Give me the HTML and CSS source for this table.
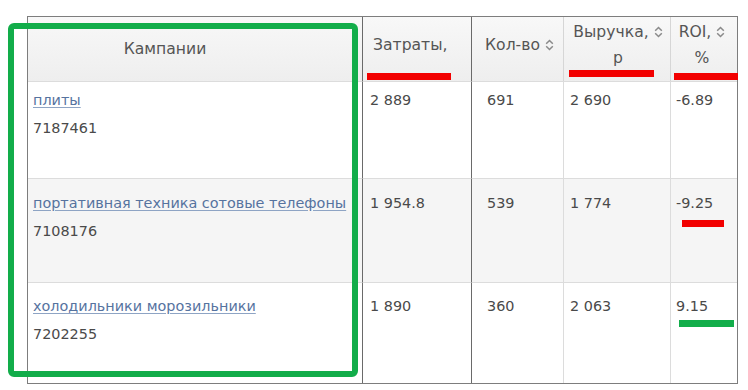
FILE: index.html
```html
<!DOCTYPE html>
<html lang="ru">
<head>
<meta charset="utf-8">
<title>Кампании</title>
<link rel="stylesheet" href="styles.css">
</head>
<body>
<div class="page">
  <div class="report">
    <div class="grid">
      <div class="th th-name">Кампании</div>
      <div class="th th-cost">Затраты,<i class="mark mark-red mark-cost"></i></div>
      <div class="th th-qty"><span class="hl">Кол-во <svg class="sort" viewBox="0 0 9 12"><path d="M1.2 4.8 4.5 1.5 7.8 4.8M1.2 7.2 4.5 10.5 7.8 7.2"/></svg></span></div>
      <div class="th th-rev"><span class="hl">Выручка, <svg class="sort" viewBox="0 0 9 12"><path d="M1.2 4.8 4.5 1.5 7.8 4.8M1.2 7.2 4.5 10.5 7.8 7.2"/></svg></span><span class="hl">р</span><i class="mark mark-red mark-rev"></i></div>
      <div class="th th-roi"><span class="hl">ROI, <svg class="sort" viewBox="0 0 9 12"><path d="M1.2 4.8 4.5 1.5 7.8 4.8M1.2 7.2 4.5 10.5 7.8 7.2"/></svg></span><span class="hl">%</span><i class="mark mark-red mark-roi"></i></div>

      <div class="td td-name r1"><a href="#">плиты</a><span>7187461</span></div>
      <div class="td r1">2 889</div>
      <div class="td r1 c-qty">691</div>
      <div class="td r1 c-rev">2 690</div>
      <div class="td r1 c-roi">-6.89</div>

      <div class="td td-name r2 alt"><a href="#">портативная техника сотовые телефоны</a><span>7108176</span></div>
      <div class="td r2 alt">1 954.8</div>
      <div class="td r2 alt c-qty">539</div>
      <div class="td r2 alt c-rev">1 774</div>
      <div class="td r2 alt c-roi">-9.25<i class="mark mark-red mark-neg"></i></div>

      <div class="td td-name r3"><a href="#">холодильники морозильники</a><span>7202255</span></div>
      <div class="td r3">1 890</div>
      <div class="td r3 c-qty">360</div>
      <div class="td r3 c-rev">2 063</div>
      <div class="td r3 c-roi">9.15<i class="mark mark-green mark-pos"></i></div>
    </div>
    <div class="focus-box"></div>
  </div>
</div>
</body>
</html>
```
FILE: styles.css
```css
* { box-sizing: border-box; }
html, body { margin: 0; background: #fff; }
body {
  font-family: "DejaVu Sans", Verdana, sans-serif;
  font-size: 14.4px;
  color: #444;
}
.page { padding: 16px 0 0 27px; }
.report { position: relative; width: 711px; }
.grid {
  display: grid;
  grid-template-columns: 334px 109px 92px 107px 67px;
  grid-template-rows: 64px 97px 104px 101px;
  border: 1px solid #7d7d7d;
}
.th {
  position: relative;
  background: linear-gradient(#f8f8f8, #eeeeee);
  border-left: 1px solid #d6d6d6;
  display: flex;
  flex-direction: column;
  align-items: center;
  justify-content: center;
  padding-bottom: 9px;
  line-height: 26px;
  font-size: 15.6px;
  color: #555;
}
.th-name { border-left: none; padding: 0 60px 0 0; }
.th-cost, .th-qty { border-left-color: #6a6a6a; }
.th-cost { align-items: flex-start; padding-left: 10px; }
.th-qty { padding-left: 4px; }
.th-rev { padding-left: 2px; }
.th-roi { padding-right: 4px; }
.hl { display: inline-flex; align-items: center; gap: 5px; white-space: nowrap; }
.sort { width: 9px; height: 12px; fill: none; stroke: #8a8a8a; stroke-width: 1.5; }

.td {
  position: relative;
  border-top: 1px solid #dcdcdc;
  border-left: 1px solid #dcdcdc;
  padding: 11px 6px 0 7px;
  line-height: 28px;
  color: #4a4a4a;
  white-space: nowrap;
}
.td:nth-child(5n+2), .td:nth-child(5n+3) { border-left-color: #6a6a6a; }
.td.c-qty { padding-left: 15px; }
.td.c-rev { padding-left: 6px; }
.td.c-roi { padding-left: 5px; }
.td.r1 { padding-top: 4px; }
.td.r2 { padding-top: 10px; }
.td.r3 { padding-top: 9px; }
.td-name {
  border-left: none;
  display: flex;
  flex-direction: column;
  padding-left: 5px;
  overflow: hidden;
}
.td-name a { color: #56739f; text-decoration: underline; text-decoration-color: #8ea4c4; text-underline-offset: 2px; }
.alt { background: #f5f5f5; }

.mark { position: absolute; display: block; height: 7px; }
.mark-red { background: #f20000; }
.mark-green { background: #12ad4a; }
.mark-cost { left: 4px; width: 84px; top: 56px; }
.mark-rev { left: 5px; width: 85px; top: 53px; }
.mark-roi { left: 3px; width: 64px; top: 56px; }
.mark-neg { left: 11px; width: 42px; top: 41px; }
.mark-pos { left: 8px; width: 55px; top: 37px; }

.focus-box {
  position: absolute;
  left: -19px;
  top: 7px;
  width: 350px;
  height: 354px;
  border: 6px solid #12ad4a;
  border-radius: 6px;
  pointer-events: none;
}
```
